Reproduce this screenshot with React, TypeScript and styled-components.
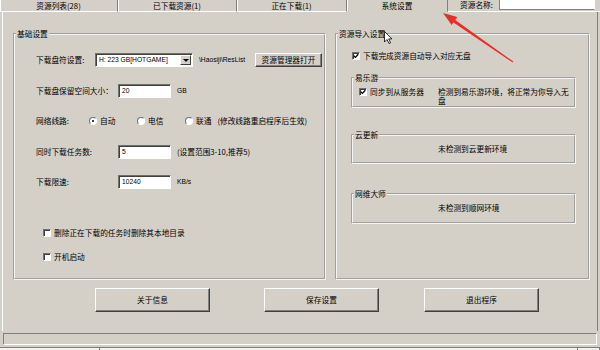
import React from "react";
import styled, { createGlobalStyle } from "styled-components";

const BG = "#d4d0c8";
const CJK = `"Noto Sans CJK SC", "Noto Sans", sans-serif`;
const LAT = `"Liberation Sans", Arial, "Noto Sans CJK SC", sans-serif`;

const Global = createGlobalStyle`
  html, body { margin: 0; padding: 0; background: ${BG}; }
  body { font-family: ${CJK}; font-size: 7.7px; color: #000; }
  * { box-sizing: border-box; }
`;

const Window = styled.div`
  width: 600px;
  height: 350px;
  overflow: hidden;
  position: relative;
  display: flex;
  flex-direction: column;
  background: ${BG};
  line-height: 10px;
`;

const TabBar = styled.div`
  display: flex;
  height: 12px;
  flex: none;
`;

const Tab = styled.div<{ $w: number; $active?: boolean }>`
  width: ${(p) => p.$w}px;
  flex: none;
  display: flex;
  align-items: center;
  justify-content: center;
  border-right: 1px solid #808080;
  border-bottom: ${(p) => (p.$active ? "1px solid transparent" : "1px solid #fff")};
  box-shadow: inset 1px 0 0 #fff;
  white-space: nowrap;
`;

const HeaderFill = styled.div`
  flex: 1;
  display: flex;
  align-items: flex-start;
  border-bottom: 1px solid #fff;
  padding-left: 12px;
`;

const HeaderLabel = styled.span`
  width: 39px;
  line-height: 10px;
  white-space: nowrap;
`;

const HeaderInput = styled.div`
  width: 96px;
  height: 10px;
  background: #fff;
  border: 1px solid;
  border-color: #808080 #fff #808080 #808080;
  border-top: none;
`;

const Panel = styled.div`
  margin: 0 2px;
  height: 319px;
  flex: none;
  border-left: 1px solid #fff;
  border-right: 1px solid #808080;
  padding: 21px 7px 0 10px;
  display: flex;
  flex-direction: column;
`;

const GroupsRow = styled.div`
  display: flex;
  gap: 9px;
  height: 247px;
`;

const GroupBox = styled.div<{ $w?: number }>`
  position: relative;
  border: 2px groove #f4f4f4;
  ${(p) => (p.$w ? `width: ${p.$w}px; flex: none;` : "flex: 1;")}
`;

const GroupTitle = styled.span`
  position: absolute;
  top: -6px;
  left: 1px;
  padding: 0 1px;
  background: ${BG};
  line-height: 10px;
  white-space: nowrap;
`;

const LeftBody = styled.div`
  display: flex;
  flex-direction: column;
  padding: 10px 0 0 21px;
`;

const Row = styled.div`
  display: flex;
  align-items: center;
  height: 30.5px;
  white-space: nowrap;
`;

const Label = styled.span<{ $w: number }>`
  width: ${(p) => p.$w}px;
  flex: none;
`;

const SelectBox = styled.div`
  width: 98px;
  height: 14px;
  flex: none;
  display: flex;
  background: #fff;
  border: 1px solid;
  border-color: #707070 #fff #fff #707070;
  box-shadow: inset 1px 1px 0 #404040;
`;

const SelectText = styled.span`
  flex: 1;
  font-family: ${LAT};
  font-size: 6.7px;
  line-height: 12px;
  padding-left: 3px;
`;

const DropBtn = styled.div`
  width: 11px;
  flex: none;
  display: flex;
  align-items: center;
  justify-content: center;
  background: ${BG};
  border: 1px solid;
  border-color: #fff #404040 #404040 #fff;
  margin: 1px 1px 1px 0;
`;

const Triangle = styled.span`
  width: 0;
  height: 0;
  border-left: 3px solid transparent;
  border-right: 3px solid transparent;
  border-top: 3px solid #000;
`;

const PathText = styled.span`
  width: 56px;
  flex: none;
  margin-left: 6px;
  font-family: ${LAT};
  font-size: 6.7px;
`;

const RaisedButton = styled.button<{ $w: number; $h: number; $ml?: number }>`
  width: ${(p) => p.$w}px;
  height: ${(p) => p.$h}px;
  margin: 0 0 0 ${(p) => p.$ml ?? 0}px;
  flex: none;
  padding: 0;
  background: ${BG};
  border: 1px solid;
  border-color: #fff #404040 #404040 #fff;
  box-shadow: inset -1px -1px 0 #808080;
  font-family: ${CJK};
  font-size: 7.7px;
  line-height: 10px;
  color: #000;
  display: flex;
  align-items: center;
  justify-content: center;
`;

const TextInput = styled.div`
  width: 53px;
  height: 14px;
  flex: none;
  background: #fff;
  border: 1px solid;
  border-color: #707070 #fff #fff #707070;
  box-shadow: inset 1px 1px 0 #404040;
  font-family: ${LAT};
  font-size: 6.7px;
  line-height: 12px;
  padding-left: 3px;
`;

const Unit = styled.span<{ $lat?: boolean }>`
  margin-left: 6px;
  ${(p) => (p.$lat ? `font-family: ${LAT}; font-size: 6.7px;` : "")}
`;

const RadioItem = styled.span<{ $w?: number }>`
  display: flex;
  align-items: center;
  gap: 3px;
  ${(p) => (p.$w ? `width: ${p.$w}px;` : "")}
  flex: none;
`;

const RadioCircle = styled.span<{ $on?: boolean }>`
  width: 8px;
  height: 8px;
  border-radius: 50%;
  background: #fff;
  border: 1px solid;
  border-color: #707070 #fff #fff #707070;
  display: flex;
  align-items: center;
  justify-content: center;
  &::after {
    content: "";
    width: 2px;
    height: 2px;
    border-radius: 50%;
    background: ${(p) => (p.$on ? "#000" : "transparent")};
  }
`;

const CheckRow = styled.div<{ $mt?: number; $h?: number; $ml?: number }>`
  display: flex;
  align-items: center;
  gap: 3px;
  height: ${(p) => p.$h ?? 24}px;
  margin-top: ${(p) => p.$mt ?? 0}px;
  margin-left: ${(p) => p.$ml ?? 0}px;
  white-space: nowrap;
`;

const CheckBoxShape = styled.span`
  width: 8px;
  height: 8px;
  flex: none;
  background: #fff;
  border: 1px solid;
  border-color: #707070 #fff #fff #707070;
  box-shadow: inset 1px 1px 0 #404040;
  display: flex;
  align-items: center;
  justify-content: center;
`;

const CheckBox = ({ checked }: { checked?: boolean }) => (
  <CheckBoxShape>
    {checked && (
      <svg width="6" height="6" viewBox="0 0 6 6">
        <path d="M0.8 2.8 L2.3 4.4 L5.3 1.2" fill="none" stroke="#000" strokeWidth="1.3" />
      </svg>
    )}
  </CheckBoxShape>
);

const RightBody = styled.div`
  display: flex;
  flex-direction: column;
  padding: 14px 0 0 14px;
`;

const SubGroup = styled.div<{ $h: number; $mt: number }>`
  position: relative;
  width: 225px;
  height: ${(p) => p.$h}px;
  margin-top: ${(p) => p.$mt}px;
  border: 2px groove #f4f4f4;
`;

const SyncRow = styled.div`
  display: flex;
  align-items: flex-start;
  padding: 8px 0 0 6px;
  line-height: 9px;
`;

const SyncItem = styled.span`
  width: 79px;
  height: 9px;
  flex: none;
  display: flex;
  align-items: center;
  gap: 3px;
  white-space: nowrap;
`;

const WrapText = styled.span`
  width: 132px;
  line-height: 9px;
`;

const SubNote = styled.div`
  padding: 7.5px 0 0 85px;
  line-height: 9px;
  white-space: nowrap;
`;

const ButtonRow = styled.div`
  display: flex;
  margin-top: 8px;
  height: 24px;
`;

const StatusFrame = styled.div`
  margin: 2px 3px 0;
  height: 12px;
  flex: none;
  border: 1px solid;
  border-color: #808080 #fff #fff #808080;
`;

const StatusBar = styled.div`
  margin-top: 2px;
  flex: 1;
  display: flex;
  border-top: 1px solid #808080;
`;

const StatusPane = styled.div<{ $w?: number }>`
  ${(p) => (p.$w ? `width: ${p.$w}px; flex: none;` : "flex: 1;")}
  background: #f3f2ee;
  border-right: 1px solid #808080;
`;

const Overlay = styled.svg`
  position: absolute;
  left: 0;
  top: 0;
  width: 600px;
  height: 350px;
  pointer-events: none;
`;

export default function App() {
  return (
    <>
      <Global />
      <Window>
        <TabBar>
          <Tab $w={118}>资源列表(28)</Tab>
          <Tab $w={119}>已下载资源(1)</Tab>
          <Tab $w={110}>正在下载(1)</Tab>
          <Tab $w={101} $active>
            系统设置
          </Tab>
          <HeaderFill>
            <HeaderLabel>资源名称:</HeaderLabel>
            <HeaderInput />
          </HeaderFill>
        </TabBar>

        <Panel>
          <GroupsRow>
            <GroupBox $w={313}>
              <GroupTitle>基础设置</GroupTitle>
              <LeftBody>
                <Row>
                  <Label $w={59}>下载盘符设置:</Label>
                  <SelectBox>
                    <SelectText>H: 223 GB[HOTGAME]</SelectText>
                    <DropBtn>
                      <Triangle />
                    </DropBtn>
                  </SelectBox>
                  <PathText>\Haosiji\ResList</PathText>
                  <RaisedButton $w={67} $h={14}>
                    资源管理器打开
                  </RaisedButton>
                </Row>
                <Row>
                  <Label $w={82}>下载盘保留空间大小：</Label>
                  <TextInput>20</TextInput>
                  <Unit $lat>GB</Unit>
                </Row>
                <Row>
                  <Label $w={53}>网络线路:</Label>
                  <RadioItem $w={48}>
                    <RadioCircle $on />
                    自动
                  </RadioItem>
                  <RadioItem $w={48}>
                    <RadioCircle />
                    电信
                  </RadioItem>
                  <RadioItem>
                    <RadioCircle />
                    联通
                  </RadioItem>
                  <Unit>(修改线路重启程序后生效)</Unit>
                </Row>
                <Row>
                  <Label $w={82}>同时下载任务数:</Label>
                  <TextInput>5</TextInput>
                  <Unit>(设置范围3-10,推荐5)</Unit>
                </Row>
                <Row>
                  <Label $w={82}>下载限速:</Label>
                  <TextInput>10240</TextInput>
                  <Unit $lat>KB/s</Unit>
                </Row>
                <CheckRow $mt={23.5} $ml={7}>
                  <CheckBox />
                  删除正在下载的任务时删除其本地目录
                </CheckRow>
                <CheckRow $ml={7}>
                  <CheckBox />
                  开机启动
                </CheckRow>
              </LeftBody>
            </GroupBox>

            <GroupBox>
              <GroupTitle>资源导入设置</GroupTitle>
              <RightBody>
                <CheckRow $h={14} $ml={1}>
                  <CheckBox checked />
                  下载完成资源自动导入对应无盘
                </CheckRow>
                <SubGroup $h={31} $mt={14}>
                  <GroupTitle>易乐游</GroupTitle>
                  <SyncRow>
                    <SyncItem>
                      <CheckBox checked />
                      同步到从服务器
                    </SyncItem>
                    <WrapText>检测到易乐游环境，将正常为你导入无盘</WrapText>
                  </SyncRow>
                </SubGroup>
                <SubGroup $h={30} $mt={26}>
                  <GroupTitle>云更新</GroupTitle>
                  <SubNote>未检测到云更新环境</SubNote>
                </SubGroup>
                <SubGroup $h={31} $mt={29}>
                  <GroupTitle>网维大师</GroupTitle>
                  <SubNote>未检测到顺网环境</SubNote>
                </SubGroup>
              </RightBody>
            </GroupBox>
          </GroupsRow>

          <ButtonRow>
            <RaisedButton $w={115} $h={24} $ml={82}>
              关于信息
            </RaisedButton>
            <RaisedButton $w={115} $h={24} $ml={54}>
              保存设置
            </RaisedButton>
            <RaisedButton $w={115} $h={24} $ml={45}>
              退出程序
            </RaisedButton>
          </ButtonRow>
        </Panel>

        <StatusFrame />
        <StatusBar>
          <StatusPane $w={100} />
          <StatusPane />
          <StatusPane $w={22} />
        </StatusBar>

        <Overlay viewBox="0 0 600 350">
          <polygon points="453.1,22.3 454.9,19.7 513.3,61.5 512.7,62.5" fill="#e5302a" />
          <polygon points="443,13 451.6,25.1 457.4,16.9" fill="#e5302a" />
          <path
            d="M384.5 31.5 L384.5 42 L387 39.5 L389 43.5 L390.6 42.8 L388.7 38.9 L392 38.9 Z"
            fill="#fff"
            stroke="#000"
            strokeWidth="0.8"
          />
        </Overlay>
      </Window>
    </>
  );
}
